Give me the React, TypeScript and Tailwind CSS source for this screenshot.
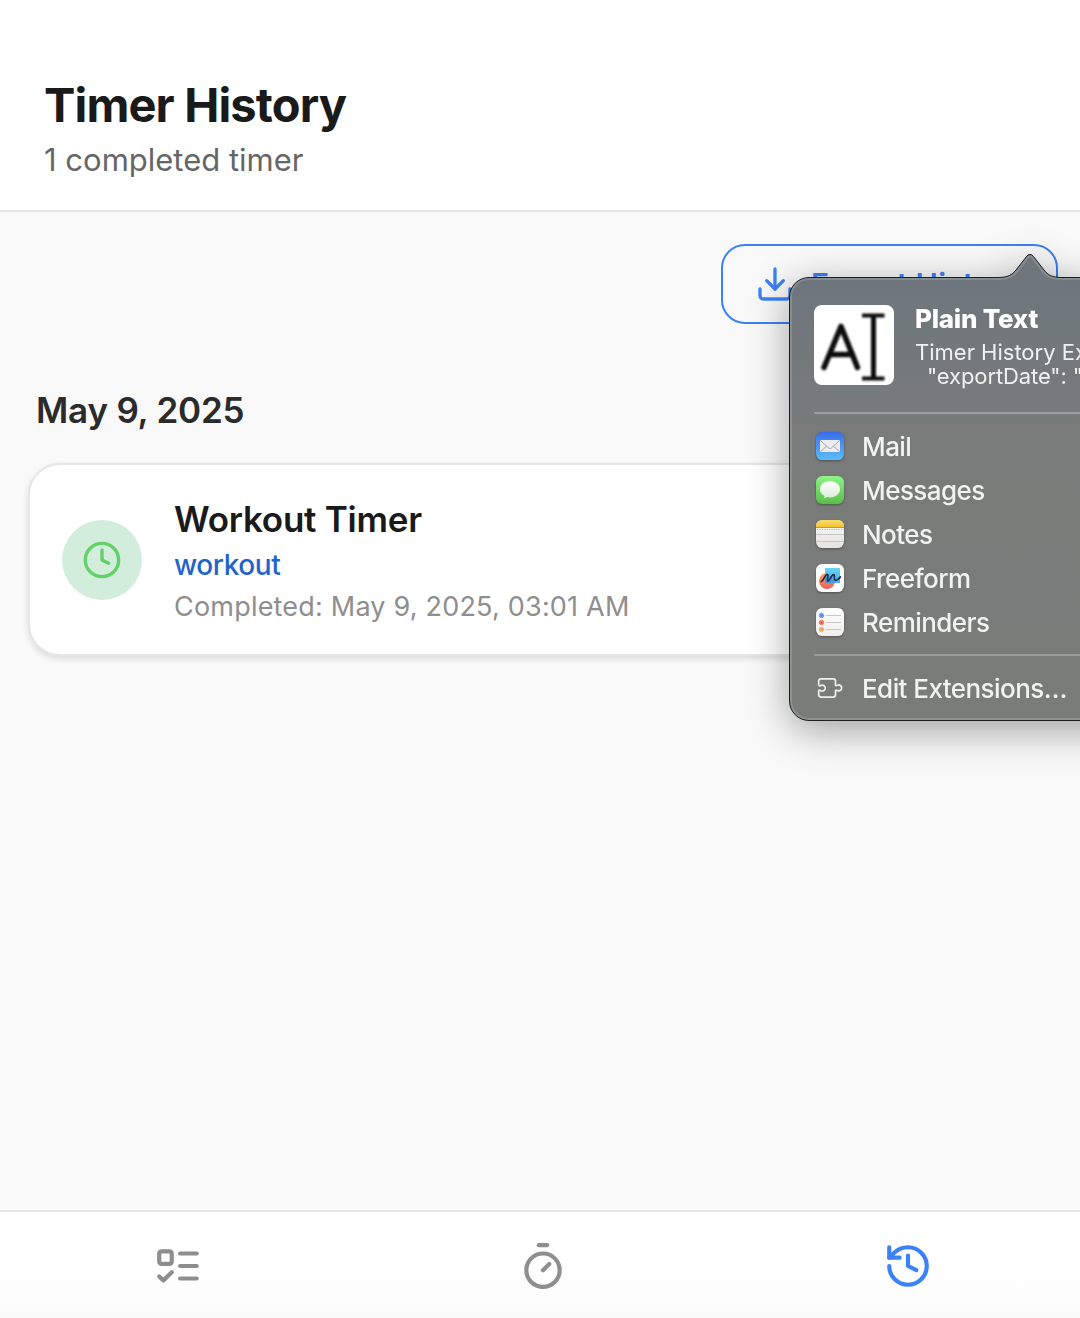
import { Clock, Download, History, Timer } from "lucide-react";
import type { ReactNode } from "react";

function MailIcon() {
  return (
    <svg viewBox="0 0 28 28" className="size-7 shrink-0 overflow-visible drop-shadow-[0_1px_1px_rgba(0,0,0,0.35)]">
      <defs>
        <linearGradient id="mail" x1="0" y1="0" x2="0" y2="1">
          <stop offset="0" stopColor="#3a6cec" />
          <stop offset="1" stopColor="#5cbdf7" />
        </linearGradient>
      </defs>
      <rect width="28" height="28" rx="6.3" fill="url(#mail)" />
      <rect x="4" y="8" width="20" height="12" rx="1" fill="#ededed" />
      <path d="M4.5 8.5 12.4 15.8a2.3 2.3 0 0 0 3.2 0L23.5 8.5M4.5 19.5l6.2-5.4M23.5 19.5l-6.2-5.4" fill="none" stroke="#a3a5a8" strokeWidth="1" />
    </svg>
  );
}

function MessagesIcon() {
  return (
    <svg viewBox="0 0 28 28" className="size-7 shrink-0 overflow-visible drop-shadow-[0_1px_1px_rgba(0,0,0,0.35)]">
      <defs>
        <linearGradient id="msg" x1="0" y1="0" x2="0" y2="1">
          <stop offset="0" stopColor="#8df487" />
          <stop offset="1" stopColor="#57bf47" />
        </linearGradient>
        <linearGradient id="bubble" x1="0" y1="0" x2="0" y2="1">
          <stop offset="0" stopColor="#ffffff" />
          <stop offset="1" stopColor="#dcebd9" />
        </linearGradient>
      </defs>
      <rect width="28" height="28" rx="6.3" fill="url(#msg)" />
      <path d="M14 5c5.600 0 10 3.600 10 8.200s-4.400 8.200-10 8.200c-1 0-2-.1-2.900-.3-1 .9-2.300 1.400-3.800 1.500.7-.7 1.100-1.600 1.200-2.600C5.800 18.500 4 16 4 13.200 4 8.600 8.400 5 14 5Z" fill="url(#bubble)" />
    </svg>
  );
}

function NotesIcon() {
  return (
    <svg viewBox="0 0 28 28" className="size-7 shrink-0 overflow-visible drop-shadow-[0_1px_1px_rgba(0,0,0,0.35)]">
      <defs>
        <clipPath id="notesClip">
          <rect width="28" height="28" rx="6.3" />
        </clipPath>
        <linearGradient id="notesTop" x1="0" y1="0" x2="0" y2="1">
          <stop offset="0" stopColor="#f9dc6c" />
          <stop offset="1" stopColor="#f3c332" />
        </linearGradient>
        <linearGradient id="paper" x1="0" y1="0" x2="0" y2="1">
          <stop offset="0" stopColor="#f8f8f6" />
          <stop offset="1" stopColor="#e5e4df" />
        </linearGradient>
      </defs>
      <g clipPath="url(#notesClip)">
        <rect width="28" height="28" fill="url(#paper)" />
        <rect width="28" height="7" fill="url(#notesTop)" />
        <path d="M0 7.500h28" stroke="#a69a78" strokeWidth="1" />
        <path d="M1 9.500h28" stroke="#bdbdbd" strokeWidth="1" strokeDasharray="1.200 1.200" />
        <path d="M0 14.500h28M0 21.500h28" stroke="#c6c6c8" strokeWidth="1" />
      </g>
    </svg>
  );
}

function FreeformIcon() {
  return (
    <svg viewBox="0 0 28 28" className="size-7 shrink-0 overflow-visible drop-shadow-[0_1px_1px_rgba(0,0,0,0.35)]">
      <defs>
        <linearGradient id="ball" x1="0" y1="0" x2="0" y2="1">
          <stop offset="0" stopColor="#f5a44a" />
          <stop offset="1" stopColor="#ee5f5f" />
        </linearGradient>
        <linearGradient id="square" x1="0" y1="0" x2="0" y2="1">
          <stop offset="0" stopColor="#66d2f5" />
          <stop offset="1" stopColor="#4badea" />
        </linearGradient>
      </defs>
      <rect width="28" height="28" rx="6.3" fill="#fff" />
      <circle cx="11" cy="17" r="8" fill="url(#ball)" />
      <rect x="9" y="4" width="15" height="15" rx=".6" fill="url(#square)" />
      <path d="M9 11.500A8 8 0 0 1 18.700 19H9.600A.6.6 0 0 1 9 18.400Z" fill="#3569a8" opacity=".3" />
      <path d="M5.400 17.400C8 16.400 9 10.300 11.300 10.300 13.200 10.300 10.300 17.200 12 17.200 13.800 17.200 15.300 10.600 17.600 10.600 19.500 10.600 17.200 16 19.300 16.200 21.200 16.300 23 15 24.500 12.800" fill="none" stroke="#15294a" strokeWidth="1.600" strokeLinecap="round" />
    </svg>
  );
}

function RemindersIcon() {
  const rows = [
    { y: 7.5, color: "#3f82f4" },
    { y: 14.5, color: "#ea5144" },
    { y: 21.5, color: "#f0a23b" },
  ];
  return (
    <svg viewBox="0 0 28 28" className="size-7 shrink-0 overflow-visible drop-shadow-[0_1px_1px_rgba(0,0,0,0.35)]">
      <defs>
        <linearGradient id="rem" x1="0" y1="0" x2="0" y2="1">
          <stop offset="0" stopColor="#ffffff" />
          <stop offset="1" stopColor="#f0efee" />
        </linearGradient>
      </defs>
      <rect width="28" height="28" rx="6.3" fill="url(#rem)" />
      {rows.map((r) => (
        <g key={r.y}>
          <circle cx="5.500" cy={r.y} r="2.300" fill={r.color} fillOpacity=".6" stroke={r.color} strokeWidth=".6" />
          <circle cx="5.500" cy={r.y} r="1.300" fill={r.color} />
          <path d={`M10 ${r.y}h15`} stroke="#c6c6c6" strokeWidth="1" />
        </g>
      ))}
    </svg>
  );
}

function ExtensionIcon() {
  return (
    <svg viewBox="0 0 28 28" className="size-7 shrink-0" fill="none" stroke="#eeefee" strokeWidth="1.700" strokeLinejoin="round">
      <path d="M2.700 11.600V7.200A2.300 2.300 0 0 1 5 4.900h12.200a2.300 2.300 0 0 1 2.300 2.300v4.300h1.300c.5 0 .8-.2 1.100-.5a3 3 0 1 1 0 5.800c-.3-.3-.6-.5-1.100-.5h-1.300v4.500a2.300 2.300 0 0 1-2.300 2.300H5a2.300 2.300 0 0 1-2.300-2.300v-4.500h1.100c.5 0 .8.2 1.100.5a3 3 0 1 0 0-5.400c-.3.300-.6.500-1.100.5H2.700" />
    </svg>
  );
}

function ListTodoIcon() {
  return (
    <svg viewBox="0 0 24 24" className="size-[50px]" fill="none" stroke="currentColor" strokeWidth="2" strokeLinecap="round" strokeLinejoin="round">
      <rect x="3" y="5" width="6" height="6" rx="1" />
      <path d="m3 17 2 2 4-4M13 6h8M13 12h8M13 18h8" />
    </svg>
  );
}

function TextCursorThumb() {
  return (
    <div className="size-20 shrink-0 rounded-lg bg-white">
      <svg viewBox="0 0 80 80" className="size-20 blur-[0.8px]" fill="none" stroke="#0c0c0c">
        <path d="M10 62.500 27 21.500 43.500 62.500M15.500 49.500h23" strokeWidth="5.600" strokeLinecap="round" strokeLinejoin="round" />
        <path d="M48 10.500h22.500M48 73.500h22.500" strokeWidth="4" />
        <path d="M59.500 10.500v63" strokeWidth="5" />
      </svg>
    </div>
  );
}

const shareTargets = [
  { label: "Mail", icon: <MailIcon /> },
  { label: "Messages", icon: <MessagesIcon /> },
  { label: "Notes", icon: <NotesIcon /> },
  { label: "Freeform", icon: <FreeformIcon /> },
  { label: "Reminders", icon: <RemindersIcon /> },
];

function ShareRow({ icon, label }: { icon: ReactNode; label: string }) {
  return (
    <div className="flex h-11 items-center gap-[18px] pl-0.5 text-[26px] font-[450] tracking-[-0.56px] text-[#f1f2f1]">
      {icon}
      <span className="whitespace-nowrap">{label}</span>
    </div>
  );
}

function SharePopover() {
  return (
    <div className="absolute left-[789px] top-[277px] w-[480px] drop-shadow-[0_9px_20px_rgba(0,0,0,0.36)]">
      <div className="h-[444px] rounded-[20px] border border-[#1d1f20] bg-linear-to-b from-[#6e767d] via-[#787b79] via-35% to-[#7a7c7a] pl-6 pt-[27px] shadow-[inset_0_0_0_2px_rgba(255,255,255,0.16)]">
        <div className="flex gap-5">
          <TextCursorThumb />
          <div className="whitespace-nowrap pl-px text-white">
            <div className="text-[26px] font-extrabold leading-7 tracking-[-0.25px]">Plain Text</div>
            <div className="mt-[7px] text-[22px] leading-6 tracking-[0px] text-[#f0f2f2]">Timer History Export</div>
            <div className="pl-3 text-[22px] leading-6 tracking-[-0.1px] text-[#f0f2f2]">"exportDate": "2025-05-09"</div>
          </div>
        </div>
        <div className="mt-6 h-0.5 bg-[#9b9e9c]" />
        <div className="pt-2.5">
          {shareTargets.map((t) => (
            <ShareRow key={t.label} {...t} />
          ))}
        </div>
        <div className="mt-2.5 h-0.5 bg-[#999b99]" />
        <div className="pt-2.5">
          <ShareRow icon={<ExtensionIcon />} label="Edit Extensions…" />
        </div>
      </div>
      <svg viewBox="0 0 64 28" className="absolute left-[209px] top-[-24px] h-7 w-16">
        <path d="M0 28v-3.500C10 24.500 14 22 18 17L28.500 3.500q3.500-4.500 7 0L46 17c4 5 8 7.500 18 7.500V28Z" fill="#6f777d" />
        <path d="M0 26C11 25.500 15 23.500 19.500 18L29.500 5q2.500-3 5 0L44.500 18C49 23.500 53 25.500 64 26" fill="none" stroke="#878e93" strokeWidth="2" />
        <path d="M0 24.500C10 24.500 14 22 18 17L28.500 3.500q3.500-4.500 7 0L46 17c4 5 8 7.500 18 7.500" fill="none" stroke="#1d1f20" strokeWidth="1" />
      </svg>
    </div>
  );
}

export default function App() {
  return (
    <div className="relative flex h-[1318px] w-[1080px] flex-col overflow-hidden bg-[#f9f9f9] font-[Inter,sans-serif]">
      <header className="h-[212px] shrink-0 border-b-2 border-[#e5e5e5] bg-white pl-11 pt-[77px]">
        <h1 className="text-[47px] font-bold leading-[56px] tracking-[-0.85px] text-[#1a1a1a]">Timer History</h1>
        <p className="mt-2 text-[31px] leading-[38px] tracking-[0px] text-[#666]">1 completed timer</p>
      </header>

      <main className="flex-1 pl-7">
        <button className="ml-[693px] mt-8 flex h-20 w-[337px] items-center gap-4 whitespace-nowrap rounded-3xl border-2 border-[#3b82f6] pl-8 text-[30px] font-semibold tracking-[0.25px] text-[#3b82f6]">
          <Download size={40} />
          <span>Export History</span>
        </button>

        <h2 className="ml-2 mt-[65px] text-[35px] font-semibold leading-[42px] tracking-[-0.2px] text-[#2b2b2b]">May 9, 2025</h2>

        <article className="mt-8 flex h-[193px] w-[1030px] items-start gap-8 rounded-[32px] border-2 border-[#e6e6e6] bg-white pl-8 shadow-[0_3px_6px_rgba(0,0,0,0.12)]">
          <div className="mt-[55px] flex size-20 items-center justify-center rounded-full bg-[#d3eddd] text-[#63d068]">
            <Clock size={40} />
          </div>
          <div className="whitespace-nowrap pt-[33px]">
            <h3 className="text-[35px] font-semibold leading-[42px] tracking-[-0.25px] text-[#1a1a1a]">Workout Timer</h3>
            <p className="mt-2 text-[28px] font-medium leading-[34px] tracking-[-0.4px] text-[#2563cc]">workout</p>
            <p className="mt-2 text-[27px] leading-[34px] tracking-[0.2px] text-[#8e8e8e]">Completed: May 9, 2025, 03:01 AM</p>
          </div>
        </article>
      </main>

      <nav className="flex h-[108px] shrink-0 border-t-2 border-[#e5e5e5] bg-linear-to-b from-white from-50% to-[#fbfbfb]">
        <div className="-ml-[4.5px] flex w-[1095px] shrink-0 pt-[29px] text-[#8e8e8e]">
          <div className="flex flex-1 justify-center"><ListTodoIcon /></div>
          <div className="flex flex-1 justify-center"><Timer size={50} /></div>
          <div className="flex flex-1 justify-center text-[#3b82f6]"><History size={50} /></div>
        </div>
      </nav>

      <SharePopover />
    </div>
  );
}
